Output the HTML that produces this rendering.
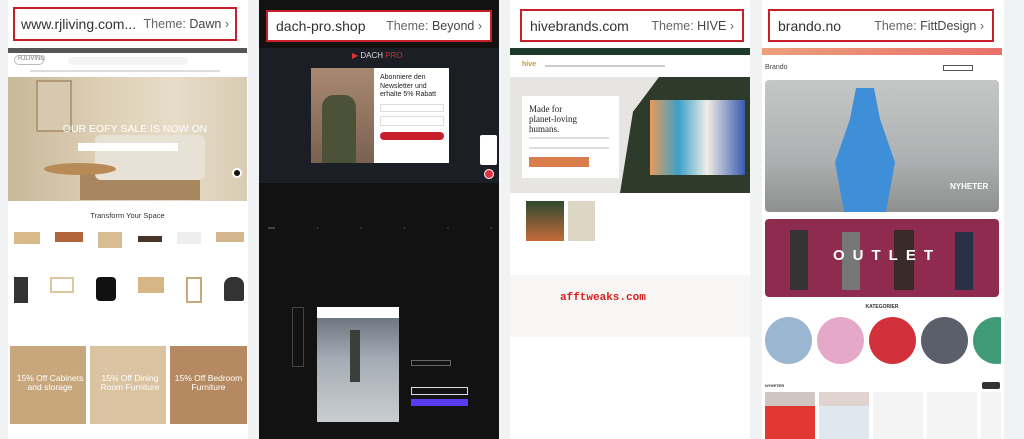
<!DOCTYPE html>
<html><head><meta charset="utf-8"><style>
*{margin:0;padding:0;box-sizing:border-box}
body{width:1024px;height:439px;overflow:hidden;background:#f1f2f4;font-family:"Liberation Sans",sans-serif;position:relative}
.a{position:absolute}
.card{position:absolute;top:0;height:439px;background:#fff}
.hd{position:absolute;top:7px;height:34px;border:2px solid #c8202a;background:#fff;display:flex;align-items:center;justify-content:space-between;padding:0 8px;font-size:14px;color:#333;white-space:nowrap}
.hd span{color:#666;font-size:12.5px}
.hd span b{font-weight:normal;color:#444}
.t{font-size:3px;color:#999}
</style></head><body>
<!-- column 1 -->
<div class="card" style="left:8px;width:240px"></div>
<div class="hd" style="left:13px;width:224px;padding:0 6px"><div>www.rjliving.com...</div><span>Theme: <b>Dawn</b> &#x203A;</span></div>
<div class="a" style="left:8px;top:48px;width:239px;height:5px;background:#555"></div>
<div class="a" style="left:14px;top:55px;width:30px;height:10px;border-radius:5px;border:1px solid #bbb;font-size:6px;color:#777;padding-left:3px">RJLIVING</div>
<div class="a" style="left:68px;top:57px;width:120px;height:8px;border-radius:4px;background:#f3f3f3"></div>
<div class="a" style="left:30px;top:70px;width:190px;height:2px;background:#ddd"></div>
<div class="a" style="left:8px;top:77px;width:239px;height:124px;background:linear-gradient(90deg,#c9b89a,#ddd0b6 40%,#e6dcc8 70%,#d9ccb2)"></div>
<div class="a" style="left:36px;top:80px;width:36px;height:52px;background:#d6c9b0;border:2px solid #b09a7a"></div>
<div class="a" style="left:80px;top:170px;width:120px;height:30px;background:#a88660"></div>
<div class="a" style="left:95px;top:135px;width:110px;height:45px;background:#e8e2d6;border-radius:6px"></div>
<div class="a" style="left:44px;top:163px;width:72px;height:12px;background:#b88a55;border-radius:50%"></div>
<div class="a" style="left:40px;top:123px;width:190px;text-align:center;color:#fff;font-size:10.5px;white-space:nowrap">OUR EOFY SALE IS NOW ON</div>
<div class="a" style="left:78px;top:143px;width:100px;height:8px;background:#fff"></div>
<div class="a" style="left:232px;top:168px;width:10px;height:10px;border-radius:50%;background:#111;border:2px solid #fff"></div>
<div class="a" style="left:8px;top:211px;width:239px;text-align:center;font-size:7.5px;color:#333">Transform Your Space</div>
<div class="a" style="left:14px;top:232px;width:230px;height:20px;display:flex;justify-content:space-between">
<div style="width:26px;height:12px;background:#d7b98a"></div><div style="width:28px;height:10px;background:#b2643a"></div><div style="width:24px;height:16px;background:#d8bd92"></div><div style="width:24px;height:6px;margin-top:4px;background:#4a3428"></div><div style="width:24px;height:12px;background:#eee"></div><div style="width:28px;height:10px;background:#d4b68e"></div></div>
<div class="a" style="left:14px;top:277px;width:230px;height:26px;display:flex;justify-content:space-between">
<div style="width:14px;height:26px;background:#333"></div><div style="width:24px;height:16px;border:2px solid #dcc7a0"></div><div style="width:20px;height:24px;background:#111;border-radius:4px"></div><div style="width:26px;height:16px;background:#d6b684"></div><div style="width:16px;height:26px;border:2px solid #c8a87a"></div><div style="width:20px;height:24px;background:#333;border-radius:8px 8px 2px 2px"></div></div>
<div class="a" style="left:10px;top:346px;width:76px;height:78px;background:#c9a77c"></div>
<div class="a" style="left:90px;top:346px;width:76px;height:78px;background:#d9c3a0"></div>
<div class="a" style="left:170px;top:346px;width:77px;height:78px;background:#b58a62"></div>
<div class="a" style="left:10px;top:374px;width:237px;color:#fff;font-size:8.5px;line-height:9px;display:flex;text-align:center"><div style="width:80px">15% Off Cabinets and storage</div><div style="width:80px">15% Off Dining Room Furniture</div><div style="width:77px">15% Off Bedroom Furniture</div></div>
<!-- column 2 -->
<div class="card" style="left:259px;width:240px;background:#121212"></div>
<div class="hd" style="left:266px;width:226px;top:10px;height:32px"><div>dach-pro.shop</div><span>Theme: <b>Beyond</b> &#x203A;</span></div>
<div class="a" style="left:259px;top:48px;width:240px;height:135px;background:#1b1e25"></div>
<div class="a" style="left:352px;top:51px;font-size:8px;color:#ddd"><span style="color:#e0323c">&#9654;</span> DACH <span style="color:#c0323a">PRO</span></div>
<div class="a" style="left:311px;top:68px;width:63px;height:95px;background:linear-gradient(#a88872,#7a6250)"></div>
<div class="a" style="left:322px;top:95px;width:34px;height:68px;background:#4b5237;border-radius:12px 12px 0 0"></div>
<div class="a" style="left:374px;top:68px;width:75px;height:95px;background:#fff"></div>
<div class="a" style="left:380px;top:74px;font-size:7px;line-height:8.5px;color:#222">Abonniere den<br>Newsletter und<br>erhalte 5% Rabatt</div>
<div class="a" style="left:380px;top:104px;width:64px;height:8px;border:1px solid #ddd"></div>
<div class="a" style="left:380px;top:116px;width:64px;height:10px;border:1px solid #ddd"></div>
<div class="a" style="left:380px;top:132px;width:64px;height:8px;background:#c8202a;border-radius:4px"></div>
<div class="a" style="left:480px;top:135px;width:17px;height:30px;background:#fff;border-radius:2px"></div>
<div class="a" style="left:484px;top:169px;width:10px;height:10px;background:#e0323c;border-radius:50%;border:1.5px solid #fff"></div>
<div class="a" style="left:268px;top:226px;width:224px;display:flex;justify-content:space-between"><i class="t">KIDS</i><i class="t">x</i><i class="t">x</i><i class="t">x</i><i class="t">x</i><i class="t">x</i></div>
<div class="a" style="left:317px;top:307px;width:82px;height:18px;background:#fff"></div>
<div class="a" style="left:317px;top:318px;width:82px;height:104px;background:linear-gradient(#6e7780,#a4adb5 40%,#c9cdd0)"></div>
<div class="a" style="left:350px;top:330px;width:10px;height:52px;background:#3a3f3a"></div>
<div class="a" style="left:292px;top:307px;width:12px;height:60px;border:1px solid #444"></div>
<div class="a" style="left:411px;top:387px;width:57px;height:8px;border:1px solid #ddd"></div>
<div class="a" style="left:411px;top:399px;width:57px;height:7px;background:#5a3cf0"></div>
<div class="a" style="left:411px;top:360px;width:40px;height:6px;border:1px solid #666"></div>
<!-- column 3 -->
<div class="card" style="left:510px;width:240px"></div>
<div class="hd" style="left:520px;width:224px;top:9px;height:33px"><div>hivebrands.com</div><span>Theme: <b>HIVE</b> &#x203A;</span></div>
<div class="a" style="left:510px;top:48px;width:240px;height:7px;background:#1d3a2c"></div>
<div class="a" style="left:522px;top:61px;font-size:7px;color:#c79a2c;font-weight:bold">hive</div>
<div class="a" style="left:545px;top:65px;width:120px;height:2px;background:#ccc"></div>
<div class="a" style="left:510px;top:77px;width:240px;height:116px;background:#e7e5e2"></div>
<div class="a" style="left:620px;top:77px;width:130px;height:116px;background:#2e3a2a;clip-path:polygon(30% 0,100% 0,100% 100%,0 100%,10% 30%)"></div>
<div class="a" style="left:650px;top:100px;width:95px;height:75px;background:linear-gradient(90deg,#e99a5a,#3aa0c8 30%,#f0ede6 60%,#3a5ab0)"></div>
<div class="a" style="left:522px;top:96px;width:97px;height:82px;background:#fff"></div>
<div class="a" style="left:529px;top:104px;font-family:'Liberation Serif',serif;font-size:9px;line-height:10px;color:#222">Made for<br>planet-loving<br>humans.</div>
<div class="a" style="left:529px;top:137px;width:80px;height:12px;border-top:2px solid #ddd;border-bottom:2px solid #ddd"></div>
<div class="a" style="left:529px;top:157px;width:60px;height:10px;background:#d97d4c"></div>
<div class="a" style="left:526px;top:201px;width:38px;height:40px;background:linear-gradient(#2d4a30,#c66a3a)"></div>
<div class="a" style="left:568px;top:201px;width:27px;height:40px;background:#ddd6c4"></div>
<div class="a" style="left:510px;top:275px;width:240px;height:62px;background:#f7f6f4"></div>
<div class="a" style="left:560px;top:292px;font-family:'Liberation Mono',monospace;font-weight:bold;font-size:11px;color:#d42020">afftweaks.com</div>
<!-- column 4 -->
<div class="card" style="left:762px;width:242px"></div>
<div class="hd" style="left:768px;width:226px;top:9px;height:33px"><div>brando.no</div><span>Theme: <b>FittDesign</b> &#x203A;</span></div>
<div class="a" style="left:762px;top:48px;width:240px;height:7px;background:linear-gradient(90deg,#eba07a,#e8706a)"></div>
<div class="a" style="left:765px;top:64px;font-size:7px;color:#444">Brando</div>
<div class="a" style="left:943px;top:65px;width:30px;height:6px;border:1px solid #555"></div>
<div class="a" style="left:765px;top:80px;width:234px;height:132px;border-radius:4px;background:linear-gradient(#c5c7c7,#aeb1b1 60%,#8e9090)"></div>
<div class="a" style="left:835px;top:88px;width:60px;height:124px;background:#3f8fd8;clip-path:polygon(35% 0,65% 0,75% 25%,100% 60%,85% 100%,15% 100%,0 60%,25% 25%)"></div>
<div class="a" style="left:950px;top:182px;font-size:8px;font-weight:bold;color:#fff">NYHETER</div>
<div class="a" style="left:765px;top:219px;width:234px;height:78px;border-radius:4px;background:#8e2b4e"></div>
<div class="a" style="left:790px;top:230px;width:18px;height:60px;background:#333"></div>
<div class="a" style="left:842px;top:232px;width:18px;height:58px;background:#777"></div>
<div class="a" style="left:894px;top:230px;width:20px;height:60px;background:#3a2b28"></div>
<div class="a" style="left:955px;top:232px;width:18px;height:58px;background:#283048"></div>
<div class="a" style="left:762px;top:247px;width:240px;text-align:center;font-size:15px;font-weight:bold;letter-spacing:8px;color:#fff;padding-left:10px">OUTLET</div>
<div class="a" style="left:762px;top:304px;width:240px;text-align:center;font-size:5px;font-weight:bold;color:#333">KATEGORIER</div>
<div class="a" style="left:765px;top:317px;width:236px;height:48px;overflow:hidden;display:flex;gap:5px">
<div style="flex:none;width:47px;height:47px;border-radius:50%;background:#9bb6d0"></div><div style="flex:none;width:47px;height:47px;border-radius:50%;background:#e6a8c8"></div><div style="flex:none;width:47px;height:47px;border-radius:50%;background:#d2303a"></div><div style="flex:none;width:47px;height:47px;border-radius:50%;background:#5b5f6a"></div><div style="flex:none;width:47px;height:47px;border-radius:50%;background:#3f9a78"></div></div>
<div class="a" style="left:765px;top:383px;font-size:4px;font-weight:bold;color:#333">NYHETER</div>
<div class="a" style="left:982px;top:382px;width:18px;height:7px;background:#333;border-radius:2px"></div>
<div class="a" style="left:765px;top:392px;width:236px;height:47px;overflow:hidden;display:flex;gap:4px">
<div style="flex:none;width:50px;background:linear-gradient(#cfc6c2 30%,#e03a30 30%)"></div><div style="flex:none;width:50px;background:linear-gradient(#e0d3d0 30%,#dfe8ee 30%)"></div><div style="flex:none;width:50px;background:#f4f4f4"></div><div style="flex:none;width:50px;background:#f4f4f4"></div><div style="flex:none;width:30px;background:#f4f4f4"></div></div>
</body></html>
